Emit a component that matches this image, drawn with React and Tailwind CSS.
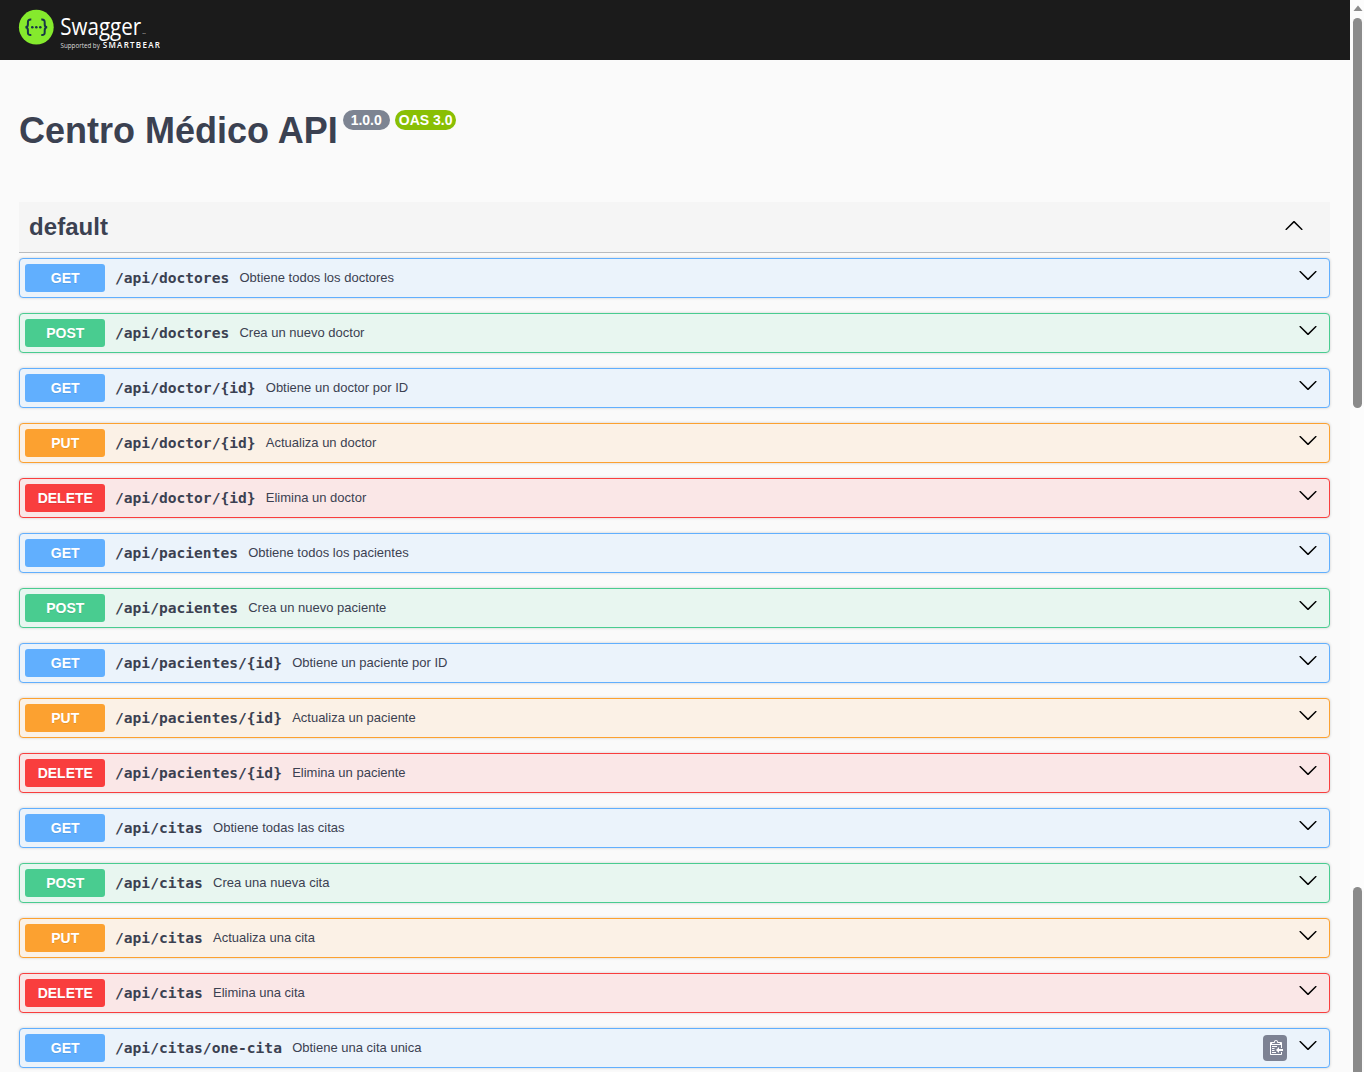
const ops = [
  ['GET', '/api/doctores', 'Obtiene todos los doctores'],
  ['POST', '/api/doctores', 'Crea un nuevo doctor'],
  ['GET', '/api/doctor/{id}', 'Obtiene un doctor por ID'],
  ['PUT', '/api/doctor/{id}', 'Actualiza un doctor'],
  ['DELETE', '/api/doctor/{id}', 'Elimina un doctor'],
  ['GET', '/api/pacientes', 'Obtiene todos los pacientes'],
  ['POST', '/api/pacientes', 'Crea un nuevo paciente'],
  ['GET', '/api/pacientes/{id}', 'Obtiene un paciente por ID'],
  ['PUT', '/api/pacientes/{id}', 'Actualiza un paciente'],
  ['DELETE', '/api/pacientes/{id}', 'Elimina un paciente'],
  ['GET', '/api/citas', 'Obtiene todas las citas'],
  ['POST', '/api/citas', 'Crea una nueva cita'],
  ['PUT', '/api/citas', 'Actualiza una cita'],
  ['DELETE', '/api/citas', 'Elimina una cita'],
  ['GET', '/api/citas/one-cita', 'Obtiene una cita unica', true],
];

const styles = {
  GET: { row: 'border-[#61affe] bg-[#ebf3fb]', tag: 'bg-[#61affe]' },
  POST: { row: 'border-[#49cc90] bg-[#e8f6f0]', tag: 'bg-[#49cc90]' },
  PUT: { row: 'border-[#fca130] bg-[#fbf1e6]', tag: 'bg-[#fca130]' },
  DELETE: { row: 'border-[#f93e3e] bg-[#fae7e7]', tag: 'bg-[#f93e3e]' },
};

function Chevron({ up }) {
  return (
    <svg width="20" height="20" viewBox="0 0 20 20" className={up ? 'rotate-180' : '-mt-[7px]'}>
      <path d="M17.418 6.109c.272-.268.709-.268.979 0s.271.701 0 .969l-7.908 7.83c-.27.268-.707.268-.979 0l-7.908-7.83c-.27-.268-.27-.701 0-.969.271-.268.709-.268.979 0L10 13.25l7.418-7.141z" />
    </svg>
  );
}

function CopyButton() {
  return (
    <span className="mr-[11px] flex h-[26px] w-6 items-center rounded-[4px] bg-[#7d8293] pl-[5px]">
      <svg width="15" height="16" viewBox="0 0 15 16" fill="#fff">
        <path d="M4 12h4v1H4v-1zm5-6H4v1h5V6zm2 3V7l-3 3 3 3v-2h5V9h-5zM6.5 8H4v1h2.5V8zM4 11h2.5v-1H4v1zm9 1h1v2c-.02.28-.11.52-.3.7-.19.18-.42.28-.7.3H3c-.55 0-1-.45-1-1V3c0-.55.45-1 1-1h3c0-1.11.89-2 2-2 1.11 0 2 .89 2 2h3c.55 0 1 .45 1 1v5h-1V5H3v9h10v-2zM4 4h8c0-.55-.45-1-1-1h-1c-.55 0-1-.45-1-1s-.45-1-1-1-1 .45-1 1-.45 1-1 1H5c-.55 0-1 .45-1 1z" />
      </svg>
    </span>
  );
}

function Operation({ method, path, summary, copy }) {
  const s = styles[method];
  return (
    <div className={`flex h-10 shrink-0 items-center rounded-[4px] border pr-[11px] pl-[5px] shadow-[0_0_3px_rgba(0,0,0,0.19)] ${s.row}`}>
      <span className={`h-7 w-20 rounded-[3px] pl-[0.5px] text-center text-sm leading-7 font-bold text-white [text-shadow:0_1px_0_rgba(0,0,0,0.1)] ${s.tag}`}>
        {method}
      </span>
      <span className="ml-2.5 font-['DejaVu_Sans_Mono',monospace] text-[14.6px] leading-5 font-bold whitespace-nowrap">{path}</span>
      <span className="ml-[10.2px] grow text-[13px] leading-5">{summary}</span>
      {copy && <CopyButton />}
      <Chevron />
    </div>
  );
}

function Logo() {
  return (
    <svg width="142" height="42" viewBox="18 9 142 42">
      <circle cx="36.3" cy="27.2" r="17.4" fill="#85ea2d" />
      <g fill="none" stroke="#173647" strokeWidth="2">
        <path d="M31.3 19.6c-2.8-.2-3.5.8-3.4 3v1.8c0 1.8-.6 2.7-2.4 2.9 1.8.2 2.4 1.1 2.4 2.9v1.8c-.1 2.2.6 3.2 3.4 3" />
        <path d="M41.3 19.6c2.8-.2 3.5.8 3.4 3v1.8c0 1.8.6 2.7 2.4 2.9-1.8.2-2.4 1.1-2.4 2.9v1.8c.1 2.2-.6 3.2-3.4 3" />
      </g>
      <g fill="#173647">
        <circle cx="32.3" cy="27.3" r="1.3" />
        <circle cx="36.3" cy="27.3" r="1.3" />
        <circle cx="40.3" cy="27.3" r="1.3" />
      </g>
      <g fill="#fff" fontFamily="'Open Sans', sans-serif">
        <text x="60.3" y="34.9" fontSize="23" fontWeight="400" textLength="80.9" lengthAdjust="spacingAndGlyphs">Swagger</text>
        <text x="142.6" y="34.3" fontSize="2">TM</text>
        <text x="60.5" y="48" fontSize="6.4" textLength="39.3" lengthAdjust="spacingAndGlyphs" fill="#ddd">Supported by</text>
        <text x="102.8" y="48.2" fontSize="8" fontWeight="600" textLength="57" lengthAdjust="spacing">SMARTBEAR</text>
      </g>
    </svg>
  );
}

export default function App() {
  return (
    <div className="flex h-[1072px] overflow-hidden bg-[#fafafa] font-['Liberation_Sans',Arial,sans-serif] text-[#3b4151]">
      <div className="flex w-[1350px] shrink-0 flex-col">
        <header className="h-[60px] shrink-0 bg-[#1b1b1b] pt-[9px] pl-[18px]">
          <Logo />
        </header>
        <main className="flex min-h-0 flex-col pr-5 pl-[19px]">
          <div className="flex h-[142px] shrink-0 items-start pt-[50px]">
            <h1 className="mt-px text-[36px] leading-[40px] font-bold whitespace-nowrap">Centro Médico API</h1>
            <span className="ml-[5px] h-5 w-[47px] rounded-full bg-[#7d8492] text-center text-sm leading-5 font-bold text-white">1.0.0</span>
            <span className="ml-[5px] h-5 w-[61px] rounded-full bg-[#89bf04] pl-px text-center text-sm leading-5 font-bold whitespace-nowrap text-white">OAS 3.0</span>
          </div>
          <section className="flex flex-col">
            <h2 className="mb-[5px] flex h-[51px] shrink-0 items-center justify-between border-b border-[#b9bbbe] bg-[#f5f5f5] pr-[26px] pb-[2px] pl-2.5 text-2xl font-bold">
              <span className="mt-[2px] tracking-[0.06px]">default</span>
              <Chevron up />
            </h2>
            <div className="flex flex-col gap-[15px]">
              {ops.map(([method, path, summary, copy]) => (
                <Operation key={method + path} method={method} path={path} summary={summary} copy={copy} />
              ))}
            </div>
          </section>
        </main>
      </div>
      <aside className="flex w-3.5 shrink-0 flex-col items-center bg-[#fcfcfc]">
        <svg width="10" height="6" viewBox="0 0 10 6" className="mt-[5px] ml-px shrink-0">
          <path d="M5 .5L9.5 6H.5z" fill="#8b8b8b" />
        </svg>
        <div className="mt-[7px] ml-px h-[390px] w-[9px] shrink-0 rounded-full bg-[#8b8b8b]" />
        <div className="mt-[479px] ml-px h-[185px] w-[9px] shrink-0 rounded-t-full bg-[#8b8b8b]" />
      </aside>
    </div>
  );
}
